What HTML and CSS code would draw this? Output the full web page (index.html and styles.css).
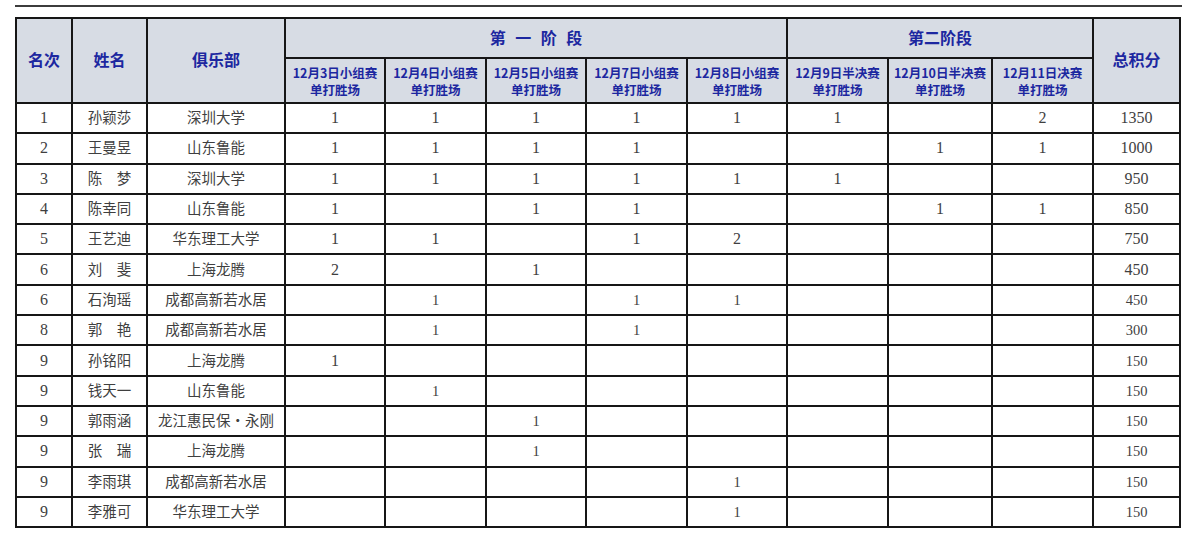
FILE: index.html
```html
<!DOCTYPE html>
<html lang="zh-CN">
<head>
<meta charset="utf-8">
<title>积分榜</title>
<link rel="stylesheet" href="styles.css">
</head>
<body>
<div class="page">
  <div class="rule"></div>
  <table class="board">
    <colgroup>
      <col class="c-rank"><col class="c-name"><col class="c-club">
      <col class="c-d"><col class="c-d1"><col class="c-d"><col class="c-d1"><col class="c-d">
      <col class="c-d1"><col class="c-d2"><col class="c-d1"><col class="c-total">
    </colgroup>
    <thead>
      <tr class="h1">
        <th rowspan="2">名次</th>
        <th rowspan="2">姓名</th>
        <th rowspan="2">俱乐部</th>
        <th colspan="5" class="spaced">第一阶段</th>
        <th colspan="3">第二阶段</th>
        <th rowspan="2">总积分</th>
      </tr>
      <tr class="h2">
        <th>12月3日小组赛<br>单打胜场</th>
        <th>12月4日小组赛<br>单打胜场</th>
        <th>12月5日小组赛<br>单打胜场</th>
        <th>12月7日小组赛<br>单打胜场</th>
        <th>12月8日小组赛<br>单打胜场</th>
        <th>12月9日半决赛<br>单打胜场</th>
        <th>12月10日半决赛<br>单打胜场</th>
        <th>12月11日决赛<br>单打胜场</th>
      </tr>
    </thead>
    <tbody>
      <tr><td class="r">1</td><td>孙颖莎</td><td>深圳大学</td><td class="n">1</td><td class="n">1</td><td class="n">1</td><td class="n">1</td><td class="n">1</td><td class="n">1</td><td></td><td class="n">2</td><td class="n">1350</td></tr>
      <tr><td class="r">2</td><td>王曼昱</td><td>山东鲁能</td><td class="n">1</td><td class="n">1</td><td class="n">1</td><td class="n">1</td><td></td><td></td><td class="n">1</td><td class="n">1</td><td class="n">1000</td></tr>
      <tr><td class="r">3</td><td>陈　梦</td><td>深圳大学</td><td class="n">1</td><td class="n">1</td><td class="n">1</td><td class="n">1</td><td class="n">1</td><td class="n">1</td><td></td><td></td><td class="n">950</td></tr>
      <tr><td class="r">4</td><td>陈幸同</td><td>山东鲁能</td><td class="n">1</td><td></td><td class="n">1</td><td class="n">1</td><td></td><td></td><td class="n">1</td><td class="n">1</td><td class="n">850</td></tr>
      <tr><td class="r">5</td><td>王艺迪</td><td>华东理工大学</td><td class="n">1</td><td class="n">1</td><td></td><td class="n">1</td><td class="n">2</td><td></td><td></td><td></td><td class="n">750</td></tr>
      <tr><td class="r">6</td><td>刘　斐</td><td>上海龙腾</td><td class="n">2</td><td></td><td class="n">1</td><td></td><td></td><td></td><td></td><td></td><td class="n">450</td></tr>
      <tr class="small"><td class="r">6</td><td>石洵瑶</td><td>成都高新若水居</td><td></td><td class="n">1</td><td></td><td class="n">1</td><td class="n">1</td><td></td><td></td><td></td><td class="n">450</td></tr>
      <tr class="small"><td class="r">8</td><td>郭　艳</td><td>成都高新若水居</td><td></td><td class="n">1</td><td></td><td class="n">1</td><td></td><td></td><td></td><td></td><td class="n">300</td></tr>
      <tr class="small"><td class="r">9</td><td>孙铭阳</td><td>上海龙腾</td><td class="n big">1</td><td></td><td></td><td></td><td></td><td></td><td></td><td></td><td class="n">150</td></tr>
      <tr class="small"><td class="r">9</td><td>钱天一</td><td>山东鲁能</td><td></td><td class="n">1</td><td></td><td></td><td></td><td></td><td></td><td></td><td class="n">150</td></tr>
      <tr class="small"><td class="r">9</td><td>郭雨涵</td><td>龙江惠民保・永刚</td><td></td><td></td><td class="n">1</td><td></td><td></td><td></td><td></td><td></td><td class="n">150</td></tr>
      <tr class="small"><td class="r">9</td><td>张　瑞</td><td>上海龙腾</td><td></td><td></td><td class="n">1</td><td></td><td></td><td></td><td></td><td></td><td class="n">150</td></tr>
      <tr class="small"><td class="r">9</td><td>李雨琪</td><td>成都高新若水居</td><td></td><td></td><td></td><td></td><td class="n">1</td><td></td><td></td><td></td><td class="n">150</td></tr>
      <tr class="small"><td class="r">9</td><td>李雅可</td><td>华东理工大学</td><td></td><td></td><td></td><td></td><td class="n">1</td><td></td><td></td><td></td><td class="n">150</td></tr>
    </tbody>
  </table>
</div>
</body>
</html>
```

FILE: styles.css
```css
html, body {
  margin: 0;
  padding: 0;
  background: #ffffff;
}

.page {
  padding: 5px 0 0 15px;
}

.rule {
  width: 1167px;
  height: 2px;
  background: #3c3c3c;
  margin-bottom: 10px;
}

.board {
  border-collapse: collapse;
  table-layout: fixed;
  width: 1166px;
  font-family: "Liberation Serif", "Noto Sans CJK SC", serif;
  color: #3f3f3f;
}

.c-rank { width: 56px; }
.c-name { width: 75px; }
.c-club { width: 138px; }
.c-d { width: 100px; }
.c-d1 { width: 101px; }
.c-d2 { width: 104px; }
.c-total { width: 87px; }

.board th,
.board td {
  border: 2px solid #161616;
  text-align: center;
  vertical-align: middle;
  padding: 0;
}

.board th {
  background: #d7dce4;
  color: #1c27a0;
  font-family: "Noto Sans CJK SC", sans-serif;
  font-weight: 700;
  font-size: 16px;
  line-height: 20px;
}

.h1 { height: 40px; }
.h2 { height: 45px; }

.h1 th {
  padding-bottom: 3px;
}

.h1 th.spaced {
  letter-spacing: 9.5px;
  text-indent: 9.5px;
}

.h2 th {
  font-size: 12.5px;
  line-height: 17px;
  padding: 0;
}

.board tbody tr {
  height: 30.3px;
}

.board td {
  font-size: 14.5px;
  line-height: 18px;
}

.board td.n,
.board td.r {
  font-size: 16px;
}

.board tr.small td.n {
  font-size: 14.5px;
}

.board tr.small td.n.big {
  font-size: 16px;
}
```
